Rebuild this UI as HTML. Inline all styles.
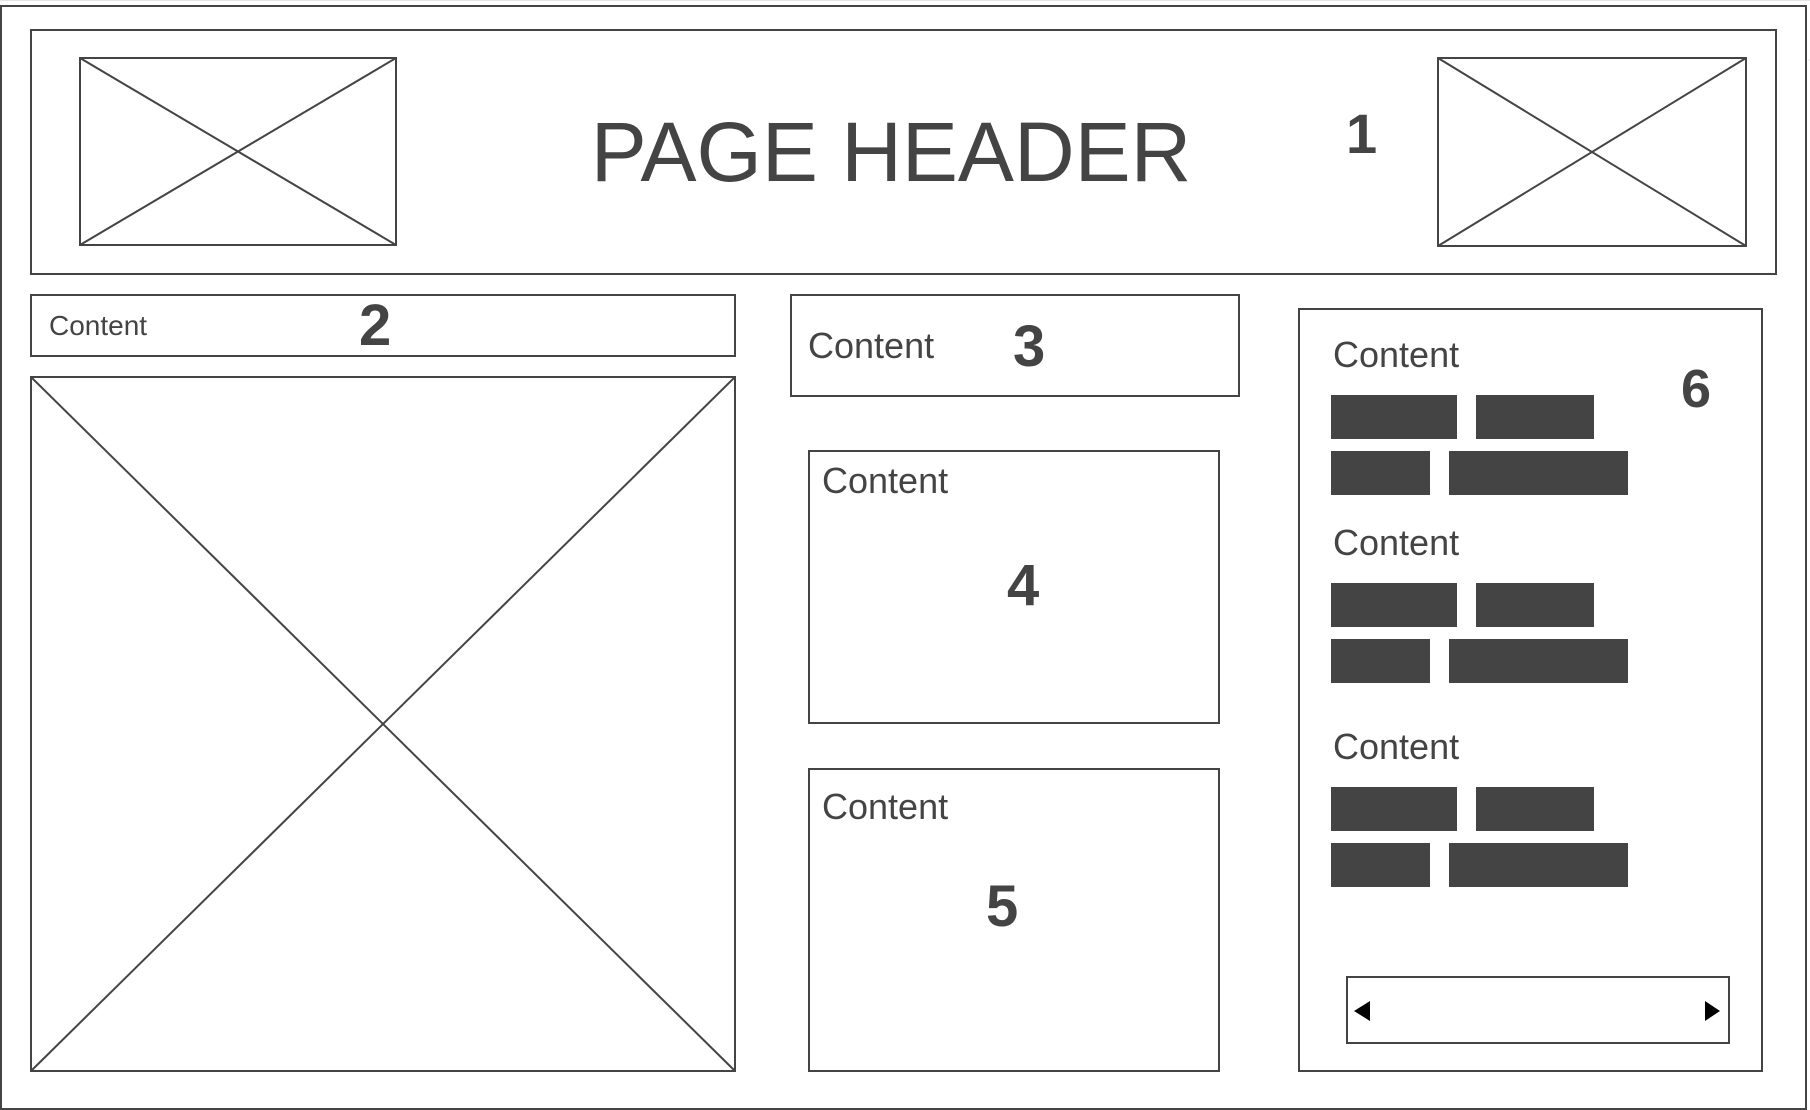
<!DOCTYPE html>
<html><head><meta charset="utf-8"><style>
html,body{margin:0;padding:0;background:#fff;width:1810px;height:1110px;overflow:hidden}
svg{display:block}
text{font-family:"Liberation Sans",Arial,sans-serif;fill:#444}
</style></head><body>
<svg width="1810" height="1110" viewBox="0 0 1810 1110" xmlns="http://www.w3.org/2000/svg">
<g stroke="#e4e4e4" stroke-width="1">
<line x1="0" y1="0.5" x2="1810" y2="0.5"/>
<line x1="1808" y1="60" x2="1810" y2="60"/>
</g>
<g fill="none" stroke="#444" stroke-width="2">
<rect x="1" y="6" width="1805" height="1103"/>
<rect x="31" y="30" width="1745" height="244"/>
<rect x="80" y="58" width="316" height="187"/>
<line x1="80" y1="58" x2="396" y2="245"/><line x1="396" y1="58" x2="80" y2="245"/>
<rect x="1438" y="58" width="308" height="188"/>
<line x1="1438" y1="58" x2="1746" y2="246"/><line x1="1746" y1="58" x2="1438" y2="246"/>
<rect x="31" y="295" width="704" height="61"/>
<rect x="31" y="377" width="704" height="694"/>
<line x1="31" y1="377" x2="735" y2="1071"/><line x1="735" y1="377" x2="31" y2="1071"/>
<rect x="791" y="295" width="448" height="101"/>
<rect x="809" y="451" width="410" height="272"/>
<rect x="809" y="769" width="410" height="302"/>
<rect x="1299" y="309" width="463" height="762"/>
<rect x="1347" y="977" width="382" height="66"/>
</g>
<text x="891" y="181" font-size="84" text-anchor="middle">PAGE HEADER</text>
<text x="1346" y="153" font-size="56" font-weight="bold">1</text>
<text x="49" y="335" font-size="28">Content</text>
<text x="359" y="345" font-size="58" font-weight="bold">2</text>
<text x="808" y="358" font-size="36">Content</text>
<text x="1013" y="366" font-size="58" font-weight="bold">3</text>
<text x="822" y="493" font-size="36">Content</text>
<text x="1007" y="605" font-size="58" font-weight="bold">4</text>
<text x="822" y="819" font-size="36">Content</text>
<text x="986" y="926" font-size="58" font-weight="bold">5</text>
<text x="1681" y="407" font-size="54" font-weight="bold">6</text>
<text x="1333" y="367" font-size="36">Content</text>
<text x="1333" y="555" font-size="36">Content</text>
<text x="1333" y="759" font-size="36">Content</text>
<g fill="#444">
<rect x="1331" y="395" width="126" height="44"/><rect x="1476" y="395" width="118" height="44"/>
<rect x="1331" y="451" width="99" height="44"/><rect x="1449" y="451" width="179" height="44"/>
<rect x="1331" y="583" width="126" height="44"/><rect x="1476" y="583" width="118" height="44"/>
<rect x="1331" y="639" width="99" height="44"/><rect x="1449" y="639" width="179" height="44"/>
<rect x="1331" y="787" width="126" height="44"/><rect x="1476" y="787" width="118" height="44"/>
<rect x="1331" y="843" width="99" height="44"/><rect x="1449" y="843" width="179" height="44"/>
</g>
<polygon points="1354,1011 1370,1001 1370,1021" fill="#000"/>
<polygon points="1720,1011 1705,1001 1705,1021" fill="#000"/>
</svg>
</body></html>
